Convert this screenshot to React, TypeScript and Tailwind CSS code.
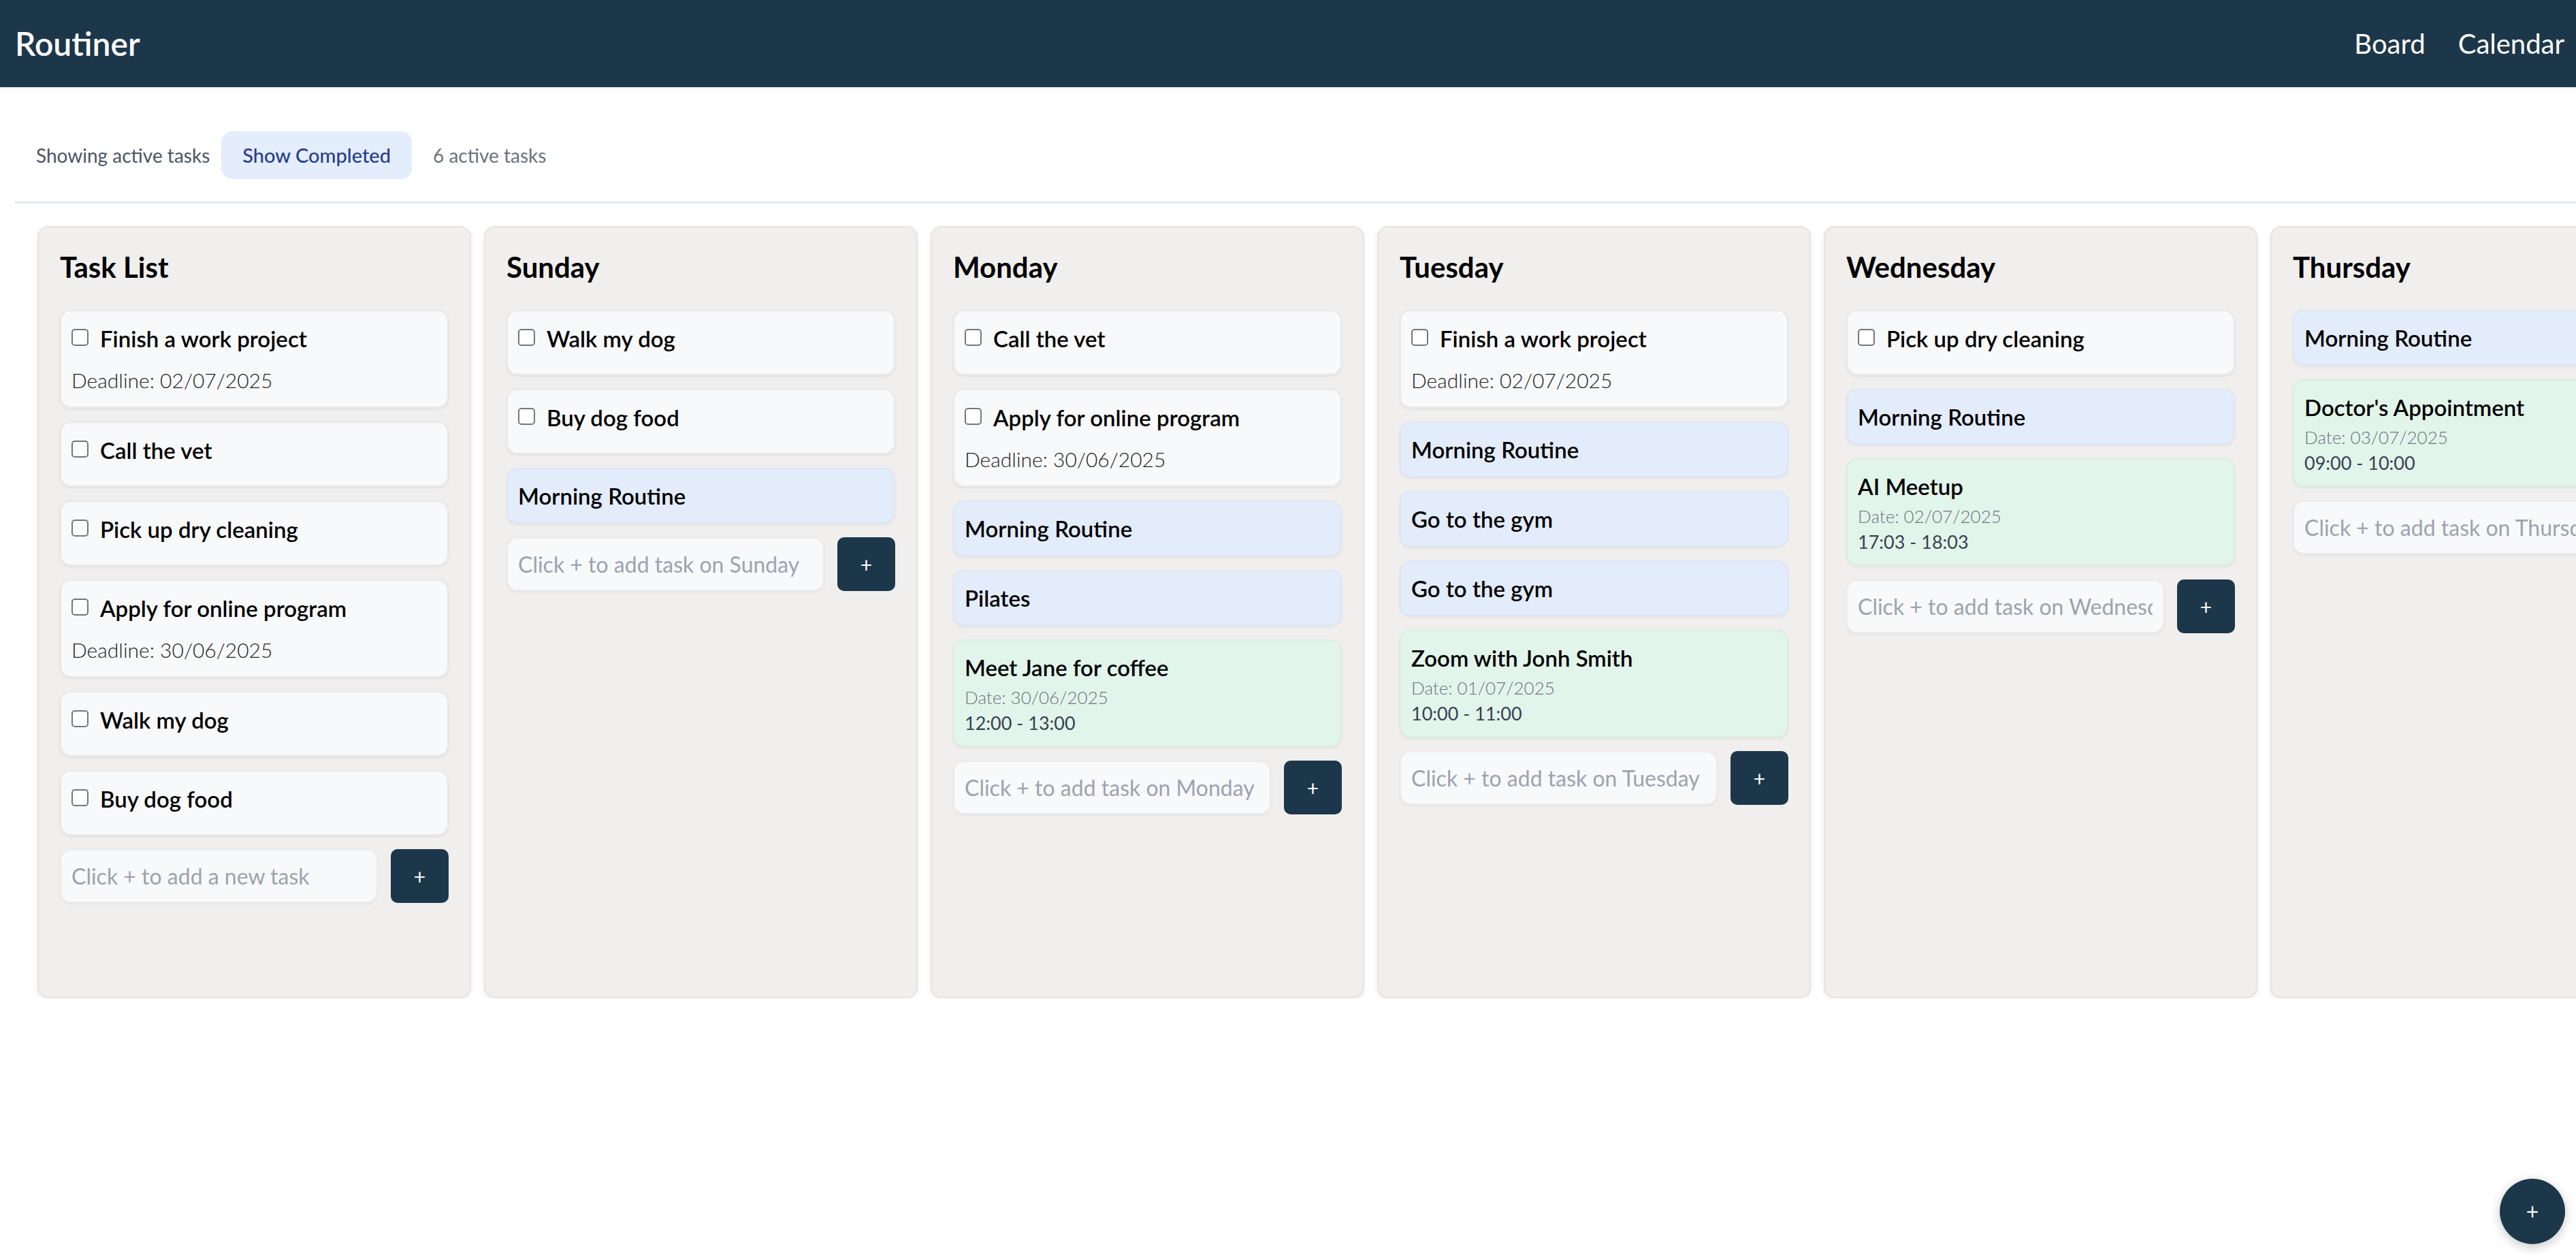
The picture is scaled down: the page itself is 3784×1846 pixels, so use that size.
import React from 'react';

type Item =
    | { kind: 'task'; title: string; deadline?: string }
    | { kind: 'routine'; title: string }
    | { kind: 'event'; title: string; date: string; time: string };

interface Column {
    name: string;
    placeholder: string;
    items: Item[];
}

const columns: Column[] = [
    {
        name: 'Task List',
        placeholder: 'Click + to add a new task',
        items: [
            { kind: 'task', title: 'Finish a work project', deadline: '02/07/2025' },
            { kind: 'task', title: 'Call the vet' },
            { kind: 'task', title: 'Pick up dry cleaning' },
            { kind: 'task', title: 'Apply for online program', deadline: '30/06/2025' },
            { kind: 'task', title: 'Walk my dog' },
            { kind: 'task', title: 'Buy dog food' },
        ],
    },
    {
        name: 'Sunday',
        placeholder: 'Click + to add task on Sunday',
        items: [
            { kind: 'task', title: 'Walk my dog' },
            { kind: 'task', title: 'Buy dog food' },
            { kind: 'routine', title: 'Morning Routine' },
        ],
    },
    {
        name: 'Monday',
        placeholder: 'Click + to add task on Monday',
        items: [
            { kind: 'task', title: 'Call the vet' },
            { kind: 'task', title: 'Apply for online program', deadline: '30/06/2025' },
            { kind: 'routine', title: 'Morning Routine' },
            { kind: 'routine', title: 'Pilates' },
            { kind: 'event', title: 'Meet Jane for coffee', date: '30/06/2025', time: '12:00 - 13:00' },
        ],
    },
    {
        name: 'Tuesday',
        placeholder: 'Click + to add task on Tuesday',
        items: [
            { kind: 'task', title: 'Finish a work project', deadline: '02/07/2025' },
            { kind: 'routine', title: 'Morning Routine' },
            { kind: 'routine', title: 'Go to the gym' },
            { kind: 'routine', title: 'Go to the gym' },
            { kind: 'event', title: 'Zoom with Jonh Smith', date: '01/07/2025', time: '10:00 - 11:00' },
        ],
    },
    {
        name: 'Wednesday',
        placeholder: 'Click + to add task on Wednesday',
        items: [
            { kind: 'task', title: 'Pick up dry cleaning' },
            { kind: 'routine', title: 'Morning Routine' },
            { kind: 'event', title: 'AI Meetup', date: '02/07/2025', time: '17:03 - 18:03' },
        ],
    },
    {
        name: 'Thursday',
        placeholder: 'Click + to add task on Thursday',
        items: [
            { kind: 'routine', title: 'Morning Routine' },
            { kind: 'event', title: "Doctor's Appointment", date: '03/07/2025', time: '09:00 - 10:00' },
        ],
    },
];

function Card({ item }: { item: Item }) {
    if (item.kind === 'routine') {
        return (
            <div className="rounded-[16px] border-2 border-[#dde6f5] bg-[#e3ecfb] px-[15px] py-[15px] shadow-[0_2px_4px_rgba(0,0,0,0.06)]">
                <div className="text-[33px] leading-[48px] font-semibold text-black">{item.title}</div>
            </div>
        );
    }
    if (item.kind === 'event') {
        return (
            <div className="rounded-[16px] border-2 border-[#d9eee1] bg-[#e2f5ea] px-[15px] py-[15px] shadow-[0_2px_4px_rgba(0,0,0,0.06)]">
                <div className="text-[33px] leading-[48px] font-semibold text-black">{item.title}</div>
                <div className="text-[26px] leading-[40px] font-light text-[#6b7280]">Date: {item.date}</div>
                <div className="text-[27px] leading-[36px] text-[#374151]">{item.time}</div>
            </div>
        );
    }
    return (
        <div className="rounded-[16px] border-2 border-[#e8e8ec] bg-[#f8f9fa] px-[15px] py-[15px] shadow-[0_2px_4px_rgba(0,0,0,0.06)]">
            <div className="flex items-center h-[50px] mb-[12px]">
                <span className="w-[25px] h-[25px] shrink-0 rounded-[5px] border-2 border-[#767676] bg-white mr-[17px] -mt-[4px]" />
                <span className="text-[33px] leading-[48px] font-semibold text-black">{item.title}</span>
            </div>
            {item.deadline && (
                <div className="text-[30px] leading-[48px] font-light text-[#222222]">Deadline: {item.deadline}</div>
            )}
        </div>
    );
}

function BoardColumn({ col }: { col: Column }) {
    return (
        <div className="w-[637px] h-[1134px] shrink-0 rounded-[16px] border-2 border-[#e5e4e2] bg-[#f0efed] px-[31px] pt-[30px] shadow-[0_2px_8px_rgba(0,0,0,0.07)]">
            <h2 className="text-[42px] leading-[56px] font-bold text-black mb-[35px]">{col.name}</h2>
            <div className="flex flex-col gap-[20px]">
                {col.items.map((item, i) => (
                    <Card key={i} item={item} />
                ))}
                <div className="flex gap-[19px]">
                    <input
                        type="text"
                        placeholder={col.placeholder}
                        className="min-w-0 flex-1 h-[79px] rounded-[16px] border-2 border-[#ebebef] bg-[#f8f9fa] px-[15px] text-[32px] text-black placeholder:text-[#9ca3af] outline-none shadow-[0_2px_4px_rgba(0,0,0,0.05)]"
                    />
                    <button className="w-[85px] h-[79px] shrink-0 rounded-[10px] bg-[#1d374a] text-white text-[30px] leading-none">
                        +
                    </button>
                </div>
            </div>
        </div>
    );
}

export default function App() {
    return (
        <div className="min-h-screen w-full bg-white font-['Lato',sans-serif] overflow-hidden">
            {/* Top bar */}
            <header className="h-[128px] bg-[#1d374a] flex items-center justify-between pl-[22px] pr-[17px] shadow-[0_3px_6px_rgba(0,0,0,0.06)]">
                <h1 className="text-[48px] font-semibold text-white">Routiner</h1>
                <nav className="flex items-center gap-[48px] text-[40px] text-white">
                    <span>Board</span>
                    <span>Calendar</span>
                </nav>
            </header>

            <main className="pl-[22px]">
                {/* Filter bar */}
                <div className="flex items-center pl-[31px] pt-[65px] pb-[33px] border-b-[3px] border-[#e5e7eb] text-[28px]">
                    <span className="text-[#4b5563]">Showing active tasks</span>
                    <button className="ml-[17px] h-[70px] px-[31px] rounded-[16px] bg-[#e3edfc] text-[#283c8f] font-medium text-[29px]">
                        Show Completed
                    </button>
                    <span className="ml-[31px] text-[#6b7280]">6 active tasks</span>
                </div>

                {/* Board */}
                <div className="flex gap-[19px] pl-[33px] pt-[33px] overflow-hidden">
                    {columns.map(col => (
                        <BoardColumn key={col.name} col={col} />
                    ))}
                </div>
            </main>

            <button className="fixed right-[16px] bottom-[19px] w-[96px] h-[96px] rounded-full bg-[#1d374a] text-white text-[32px] leading-none shadow-[0_4px_16px_rgba(0,0,0,0.22)]">
                +
            </button>
        </div>
    );
}
